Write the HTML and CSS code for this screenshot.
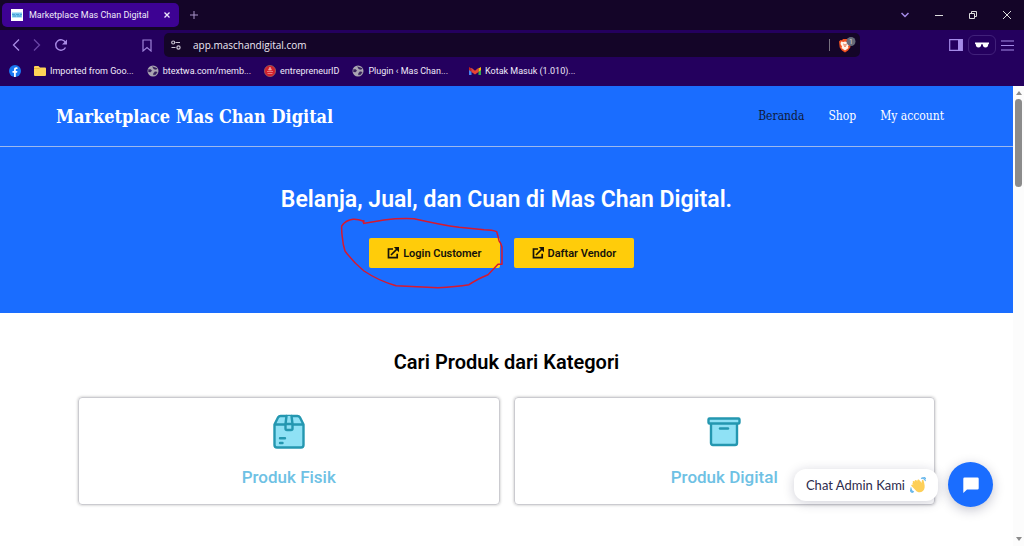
FILE: index.html
```html
<!DOCTYPE html>
<html lang="id">
<head>
<meta charset="utf-8">
<meta name="viewport" content="width=device-width, initial-scale=1">
<title>Marketplace Mas Chan Digital</title>
<link rel="stylesheet" href="styles.css">
</head>
<body>
<svg class="defs" aria-hidden="true">
  <symbol id="globe" viewBox="0 0 12 12"><circle cx="6" cy="6" r="5.500" fill="#aaa5b2"/><path d="M1.500 4.500h2.300l1 1.200-1.300 1.200H1.500zM5.500 1.500 6.800 4 9 4.500l1.500-1.200M6.500 8.500l1.300-1.800 2.400.3-1.500 2.600-2.200.4z" fill="#37225c" stroke="#37225c" stroke-width=".4"/></symbol>
  <symbol id="external" viewBox="0 0 12 12"><path d="M6 2H1.500v8.700h8.700V6.800M4 8l6-6" fill="none" stroke="#16120a" stroke-width="1.700"/><path d="M6.800 0H12v5.200z" fill="#16120a"/></symbol>
</svg>

<header class="browser">
  <div class="tabs">
    <div class="tab">
      <svg class="favicon" viewBox="0 0 12 12" aria-hidden="true"><path fill="#fff" d="M0 0h12v12H0z"/><path fill="#7cc8ef" d="M1 3.500h10v5H1z"/><path d="M1 5.500h3m1 0h3m1 0h2M2 7h3m1 0h4" stroke="#3b95cc" stroke-width=".8"/></svg>
      <span class="tab-title">Marketplace Mas Chan Digital</span>
      <button class="icon-button" aria-label="Tutup tab"><svg width="6" height="6" viewBox="0 0 6 6"><path d="m.5.5 5 5m0-5-5 5" stroke="#eee8ff" stroke-width="1.300"/></svg></button>
    </div>
    <button class="icon-button new-tab" aria-label="Tab baru"><svg width="8" height="8" viewBox="0 0 8 8"><path d="M4 0v8M0 4h8" stroke="#a894c9"/></svg></button>
    <div class="window-controls">
      <button class="icon-button" aria-label="Cari tab"><svg width="8" height="8" viewBox="0 0 8 8"><path d="m.5 2 3.500 3.500L7.500 2" fill="none" stroke="#a58be8" stroke-width="1.500"/></svg></button>
      <button class="icon-button" aria-label="Minimalkan"><svg width="8" height="8" viewBox="0 0 8 8"><path d="M0 4.500h8" stroke="#ddd"/></svg></button>
      <button class="icon-button" aria-label="Pulihkan"><svg width="8" height="8" viewBox="0 0 8 8"><path d="M.5 2.500h5v5h-5zM2.500 2.500v-2h5v5h-2" fill="none" stroke="#ddd"/></svg></button>
      <button class="icon-button" aria-label="Tutup"><svg width="8" height="8" viewBox="0 0 8 8"><path d="m0 0 8 8m0-8L0 8" stroke="#ddd"/></svg></button>
    </div>
  </div>

  <div class="toolbar">
    <div class="nav-buttons">
      <button class="icon-button" aria-label="Kembali"><svg width="8" height="12" viewBox="0 0 8 12"><path d="M7 .5 1.500 6 7 11.500" fill="none" stroke="#a98be6" stroke-width="1.300"/></svg></button>
      <button class="icon-button" aria-label="Maju"><svg width="8" height="12" viewBox="0 0 8 12"><path d="M1 .5 6.500 6 1 11.500" fill="none" stroke="#6a45a6" stroke-width="1.300"/></svg></button>
      <button class="icon-button" aria-label="Muat ulang"><svg width="14" height="12" viewBox="0 0 14 12"><path d="M11.500 3.500A5.200 5.200 0 1 0 11.500 8.500" fill="none" stroke="#a98be6" stroke-width="1.400"/><path d="M13 .5v5H8z" fill="#a98be6"/></svg></button>
    </div>
    <button class="icon-button bookmark" aria-label="Markah"><svg width="10" height="13" viewBox="0 0 10 13"><path d="M1 1h8v11L5 8.500 1 12z" fill="none" stroke="#9e82d8" stroke-width="1.200"/></svg></button>
    <div class="address">
      <svg width="10" height="10" viewBox="0 0 10 10" aria-hidden="true"><g fill="none" stroke="#c9c3d3" stroke-width="1.200"><circle cx="2.200" cy="2.500" r="1.500"/><path d="M4.500 2.500H9M.5 7.500h4"/><circle cx="7.500" cy="7.500" r="1.600"/></g></svg>
      <input class="url" type="text" aria-label="Alamat" value="app.maschandigital.com">
      <span class="divider"></span>
      <button class="icon-button" aria-label="Perisai"><svg width="18" height="16" viewBox="0 0 18 16"><path d="M1 4.500 2.500 3l1.500.2L5 2h4l1 1.200 1.500-.2L13 4.500l-.7 6L10 13.500l-3 2-3-2-2.300-3z" fill="#f1511f"/><path d="m3 4.500 2.500.5L7 4.500l1.500.5 2.500-.5.5 2.500-1.500 2.500.5 1.500L7 13.500l-3.500-2.500.5-1.500L2.500 7z" fill="#fff3e8"/><path d="m5 7 1.500.5L6 9l1 .7L8 9l-.5-1.500L9 7" fill="none" stroke="#e76a41" stroke-width=".8"/><circle cx="13" cy="4.500" r="4.500" fill="#666b7a"/><text x="13" y="7" text-anchor="middle" class="badge-count">1</text></svg></button>
    </div>
    <div class="toolbar-end">
      <button class="icon-button" aria-label="Bilah sisi"><svg width="14" height="12" viewBox="0 0 14 12"><path d="M.7.700h12.600v10.600H.7z" fill="none" stroke="#a58be8" stroke-width="1.200"/><path d="M9 0h4.500v12H9z" fill="#a58be8"/></svg></button>
      <button class="icon-button glasses" aria-label="Profil"><svg width="14" height="6" viewBox="0 0 14 6"><path d="M0 .5h14v1.200l-.7.5C13 4.500 12.300 5.500 10.500 5.500S8 4.500 7.700 2.200H6.300C6 4.500 5.300 5.500 3.500 5.500S1 4.500.7 2.200L0 1.700z" fill="#fff"/></svg></button>
      <button class="icon-button" aria-label="Menu"><svg width="13" height="11" viewBox="0 0 13 11"><path d="M0 1h13M0 5.500h13M0 10h13" stroke="#a58be8" stroke-width="1.200"/></svg></button>
    </div>
  </div>

  <nav class="bookmarks" aria-label="Markah">
    <a href="#" aria-label="Facebook"><svg width="12" height="12" viewBox="0 0 12 12"><circle cx="6" cy="6" r="6" fill="#1877f2"/><path d="M5 12V7.800H3.500V6H5V4.700C5 3.100 6 2.300 7.300 2.300l1.200.1V4h-.8c-.7 0-.9.4-.9.900V6h1.600l-.3 1.800H6.800V12z" fill="#fff"/></svg></a>
    <a href="#"><svg width="12" height="12" viewBox="0 0 12 12" aria-hidden="true"><path d="M0 2q0-1 1-1h3.500L6 2.500h5q1 0 1 1V10q0 1-1 1H1q-1 0-1-1z" fill="#ffd257"/><path d="M0 3.500h5.500" stroke="#dca92e" stroke-width=".7"/></svg>Imported from Goo...</a>
    <a href="#"><svg width="12" height="12" aria-hidden="true"><use href="#globe"/></svg>btextwa.com/memb...</a>
    <a href="#"><svg width="12" height="12" viewBox="0 0 12 12" aria-hidden="true"><circle cx="6" cy="6" r="5.600" fill="#d2202d" stroke="#a66a60" stroke-width=".7"/><path d="M6 2 4.500 5h3zM3 6.500h6M3.500 8.500h5" fill="#f3aaa8" stroke="#f0a0a0" stroke-width=".7"/></svg>entrepreneurID</a>
    <a href="#"><svg width="12" height="12" aria-hidden="true"><use href="#globe"/></svg>Plugin ‹ Mas Chan...</a>
    <a href="#" class="mail"><svg width="12" height="12" viewBox="0 0 12 12" aria-hidden="true"><path d="M0 3h2.500v7H0z" fill="#4285f4"/><path d="M9.500 3H12v7H9.500z" fill="#34a853"/><path d="M9.500 3.500 12 2v3L9.500 7z" fill="#fbbc04"/><path d="M0 2 2.500 3.500V7L0 5z" fill="#c5221f"/><path d="m2.500 2.800 3.500 3 3.500-3V7L6 9.500 2.500 7z" fill="#ea4335"/></svg>Kotak Masuk (1.010)...</a>
  </nav>
</header>

<div class="viewport">
  <div class="site">
    <header class="site-header">
      <a class="brand" href="#">Marketplace Mas Chan Digital</a>
      <nav class="menu"><a href="#" class="current">Beranda</a><a href="#">Shop</a><a href="#">My account</a></nav>
    </header>
    <main>
      <section class="hero">
        <h1>Belanja, Jual, dan Cuan di Mas Chan Digital.</h1>
        <div class="actions">
          <div class="action marked">
            <a class="cta" href="#"><svg width="12" height="12" aria-hidden="true"><use href="#external"/></svg>Login Customer</a>
            <svg class="scribble" viewBox="0 0 168 76" aria-hidden="true"><path d="M24 8q2-3 0-2-5-2-10-1.700Q7 5 2.700 11 2.500 17 3.300 22 4 30 6 36 14 47 25 56q15 10 32 14.700 20 1 42 2 18-1 31-3 7-5 19-10 5-5 10-10.400h4V32q-1-4-3-6.300-1-5-2.300-9-4-2-12.700-2l-25-2.400Q103 10 75 3.700 60 3 45 5L24 8.500"/></svg>
          </div>
          <div class="action"><a class="cta" href="#"><svg width="12" height="12" aria-hidden="true"><use href="#external"/></svg>Daftar Vendor</a></div>
        </div>
      </section>
      <section class="categories">
        <h2>Cari Produk dari Kategori</h2>
        <div class="cards">
          <a class="card" href="#">
            <svg width="36" height="36" viewBox="0 0 36 36" aria-hidden="true"><g fill="#8fe1f5" stroke="#2497b0" stroke-width="2.400" stroke-linejoin="round" stroke-linecap="round"><path d="M3.500 10.500 7 3.500Q8 2 9.500 2h17q1.500 0 2.500 1.500l3.500 7V31q0 2.500-2.500 2.500H6Q3.500 33.500 3.500 31zM3.500 10.500h29"/><path d="M15.500 2 14.500 10v4.500q0 1.500 1.500 1.500h4q1.500 0 1.500-1.500V10l-1-8M14.500 10h7M9 24.200h5M9 29h2.500"/></g></svg>
            <h3>Produk Fisik</h3>
          </a>
          <a class="card" href="#">
            <svg width="36" height="36" viewBox="0 0 36 36" aria-hidden="true"><g fill="#8fe1f5" stroke="#2497b0" stroke-width="2.400" stroke-linejoin="round" stroke-linecap="round"><path d="M5 8.500h26V29q0 2-2 2H7q-2 0-2-2z"/><rect x="2.500" y="4.500" width="31" height="5" rx="1"/><path d="M14 14.500h8"/></g></svg>
            <h3>Produk Digital</h3>
          </a>
        </div>
      </section>
    </main>
  </div>
  <div class="scrollbar" aria-hidden="true"><span class="arrow up"></span><span class="thumb"></span><span class="arrow down"></span></div>
  <aside class="chat">
    <span class="bubble">Chat Admin Kami
      <svg width="16" height="16" viewBox="0 0 16 16" role="img" aria-label="Lambaian tangan"><path d="M3 5.500c-.9-1.100.4-2.200 1.300-1.200L5 5c-1-1.500.5-2.700 1.600-1.500l.9.900C6.700 3 8.200 1.800 9.300 3l2.600 3c-.3-1.500-.4-3 .8-3.300 1 0 1 1.500 1.500 3.300.8 3.500.8 6-1.300 8-2.300 2-5.500 1.500-7.300-.8L1.500 9c-.8-1.200.5-2.200 1.500-1.200l.8.700-1.500-2z" fill="#fdcf58"/><path d="M11 1.500c2-.8 4 .5 4.500 2.700M11.500 0c2-.3 3.500.5 4.300 2M1 10.500c-.3 2 1 4 3 4.500M0 12.500c.3 1.800 1.300 2.800 2.800 3.200" fill="none" stroke="#67b7ec" stroke-width="1.100"/></svg>
    </span>
    <button class="chat-button" aria-label="Buka obrolan"><svg width="16" height="16" viewBox="0 0 16 16"><path d="M1.500.5h13q1.200 0 1.200 1.200v9.600q0 1.200-1.200 1.200H4L.3 16V1.700Q.3.500 1.500.5z" fill="#fff"/></svg></button>
  </aside>
</div>
</body>
</html>
```

FILE: styles.css
```css
* { box-sizing: border-box; }
body {
  margin: 0;
  height: 100vh;
  display: flex;
  flex-direction: column;
  overflow: hidden;
  font-family: Roboto, "Liberation Sans", sans-serif;
  background: #fff;
}
a { color: inherit; text-decoration: none; }
h1, h2, h3 { margin: 0; }
svg { flex: none; display: block; }
.defs { position: absolute; width: 0; height: 0; }
.icon-button {
  display: flex;
  align-items: center;
  justify-content: center;
  padding: 0;
  border: 0;
  background: none;
}

/* Browser frame */
.browser {
  flex: none;
  background: #24005e;
  color: #f0eafa;
  font: 9px/12px Roboto, "Noto Sans", sans-serif;
}
.tabs {
  display: flex;
  align-items: center;
  height: 30px;
  padding: 0 13px 0 2px;
  background: #140528;
}
.tab {
  display: flex;
  align-items: center;
  width: 177px;
  height: 24px;
  padding: 0 9px;
  border-radius: 5px;
  background: #3d0293;
}
.favicon { width: 12px; height: 12px; margin-right: 6px; }
.tab-title { flex: 1; white-space: nowrap; }
.new-tab { margin-left: 11px; }
.window-controls { display: flex; gap: 26px; margin-left: auto; }
.toolbar { display: flex; align-items: center; height: 30px; padding: 0 10px 0 12px; }
.nav-buttons { display: flex; gap: 13px; }
.bookmark { margin: 0 12px 0 74px; }
.address {
  flex: 1;
  display: flex;
  align-items: center;
  height: 24px;
  padding: 0 4px 0 7px;
  border-radius: 5px;
  background: #140528;
}
.url {
  flex: 1;
  min-width: 0;
  padding: 0 0 0 12px;
  border: 0;
  background: none;
  color: #eee9f5;
  font: 10px/16px "Open Sans", "Noto Sans", sans-serif;
}
.divider { width: 1px; height: 12px; margin-right: 8px; background: #77717f; }
.badge-count { font: 7px Roboto, sans-serif; fill: #d5d6dd; }
.toolbar-end { display: flex; align-items: center; gap: 5px; margin-left: 89px; }
.glasses { width: 28px; height: 20px; border: 1px solid #41217a; border-radius: 6px; }
.bookmarks {
  display: flex;
  align-items: center;
  gap: 13px;
  height: 26px;
  padding: 0 9px 4px;
}
.bookmarks a { display: flex; align-items: center; gap: 4px; white-space: nowrap; }
.bookmarks .mail { margin-left: 8px; }

/* Page and scrollbar */
.viewport { position: relative; flex: 1; min-height: 0; display: flex; }
.site { flex: 1; min-width: 0; overflow: hidden; }
.scrollbar {
  width: 11px;
  display: flex;
  flex-direction: column;
  align-items: center;
  padding: 5px 0;
  background: #fcfcfc;
}
.arrow { border: 3px solid transparent; }
.up { border-top: 0; border-bottom: 4px solid #8b8b8b; }
.down { border-bottom: 0; border-top: 4px solid #8b8b8b; margin-top: auto; }
.thumb { width: 7px; height: 88px; margin-top: 4px; border-radius: 4px; background: #8b8b8b; }

/* Site header */
.site-header {
  display: flex;
  align-items: center;
  justify-content: space-between;
  height: 61px;
  padding: 0 69px 0 56px;
  border-bottom: 1px solid #9db9ee;
  background: #1a6dff;
  color: #fff;
  font-family: "Roboto Slab", "DejaVu Serif Condensed", "DejaVu Serif", serif;
}
.brand { font-size: 18px; font-weight: 700; white-space: nowrap; }
.menu { display: flex; gap: 24px; font-size: 12px; font-weight: 500; white-space: nowrap; }
.current { color: #101a3a; font-weight: 400; }

/* Hero */
.hero { padding: 38px 16px 45px; background: #1a6dff; color: #fff; text-align: center; }
.hero h1 { font-size: 23px; line-height: 30px; font-weight: 600; }
.actions { display: grid; grid-template-columns: 1fr 1fr; gap: 14px; margin-top: 23px; }
.action { display: flex; }
.marked { position: relative; justify-self: end; }
.cta {
  display: flex;
  align-items: center;
  gap: 4px;
  height: 30px;
  padding: 0 18px;
  border-radius: 2px;
  background: #ffcc0a;
  color: #16120a;
  font-size: 11px;
  font-weight: 600;
}
.scribble { position: absolute; left: -30px; top: -23px; width: 168px; height: 76px; pointer-events: none; }
.scribble path { fill: none; stroke: #d7192f; stroke-width: 1.5; stroke-linejoin: round; }

/* Categories */
.categories { padding: 36px 78px; text-align: center; }
.categories h2 { font-size: 20px; line-height: 26px; font-weight: 600; color: #000; }
.cards { display: grid; grid-template-columns: 1fr 1fr; gap: 14px; margin-top: 22px; }
.card {
  display: flex;
  flex-direction: column;
  align-items: center;
  gap: 15px;
  padding: 16px 16px 15px;
  border: 1px solid #cbcbd0;
  border-radius: 4px;
  box-shadow: 0 0 3px #bbb;
}
.card h3 { font-size: 17px; line-height: 24px; font-weight: 500; color: #6ec1e4; }

/* Chat */
.chat { position: absolute; right: 31px; bottom: 39px; display: flex; align-items: center; gap: 10px; }
.bubble {
  display: flex;
  align-items: center;
  gap: 5px;
  height: 32px;
  padding: 0 12px;
  border-radius: 12px;
  background: #fff;
  box-shadow: 0 2px 12px rgba(20, 20, 60, .2);
  color: #2c2a4c;
  font: 13px/20px Lato, sans-serif;
  white-space: nowrap;
}
.chat-button {
  display: flex;
  align-items: center;
  justify-content: center;
  width: 45px;
  height: 45px;
  padding: 0;
  border: 0;
  border-radius: 50%;
  background: #1a6dff;
  box-shadow: 0 3px 12px rgba(20, 20, 60, .25);
}
```
